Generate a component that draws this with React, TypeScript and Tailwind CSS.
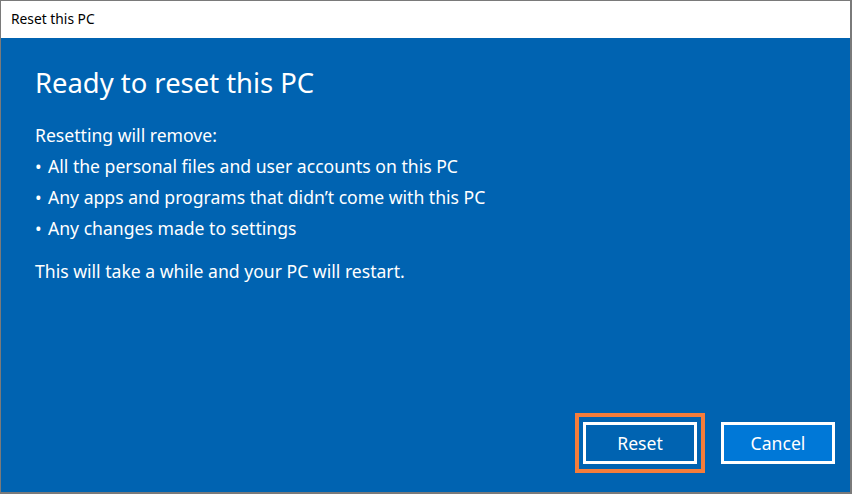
import React from 'react';

const font = { fontFamily: '"Noto Sans", "Open Sans", sans-serif' };

const items = [
  'All the personal files and user accounts on this PC',
  'Any apps and programs that didn\u2019t come with this PC',
  'Any changes made to settings',
];

const App: React.FC = () => {
  return (
    <div
      className="w-[852px] h-[494px] flex flex-col border-l border-t border-[#7a7a7a] border-r-2 border-b-2 bg-[#0063b1] overflow-hidden"
      style={font}
    >
      {/* Title bar */}
      <div className="h-[37px] bg-white flex items-center pl-[10px] text-[13.8px] text-black shrink-0">
        Reset this PC
      </div>

      {/* Content */}
      <div className="flex-1 flex flex-col text-white">
        <div className="px-[34px] pt-[25px]">
          <h1 className="text-[27.4px] leading-[40px] font-normal">Ready to reset this PC</h1>

          <div className="mt-[17px] text-[17.6px] leading-[31px]">
            <p>Resetting will remove:</p>
            {items.map(item => (
              <p key={item}>
                <span className="inline-block w-[13px]">•</span>
                {item}
              </p>
            ))}
            <p className="mt-[12px]">This will take a while and your PC will restart.</p>
          </div>
        </div>

        {/* Buttons */}
        <div className="mt-auto mb-[19px] flex justify-end items-center gap-[16px] pr-[15px]">
          <div className="border-[4px] border-[#f57d3b] px-[4px] py-[5px]">
            <button className="w-[114px] h-[42px] border-[3px] border-white bg-[#0063b1] text-white text-[17.6px]">
              Reset
            </button>
          </div>
          <button className="w-[114px] h-[42px] border-[3px] border-white bg-[#0078d7] text-white text-[17.6px]">
            Cancel
          </button>
        </div>
      </div>
    </div>
  );
};

export default App;
